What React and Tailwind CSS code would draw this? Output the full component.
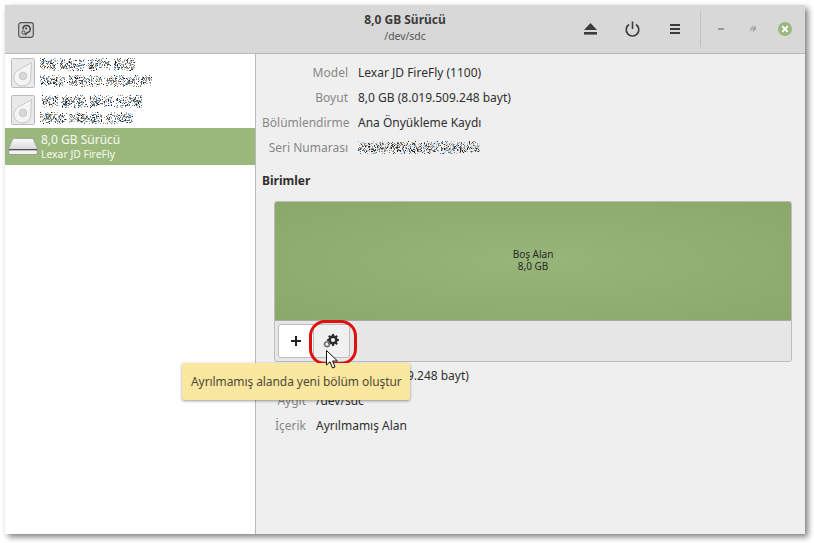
import React from "react";

const font = { fontFamily: '"Noto Sans", sans-serif' };

// pixel noise used for the scrambled text in the screenshot
function Scramble({ width, height, seed, gaps = [] }) {
  const cells = [];
  let s = seed;
  const rand = () => {
    s = (s * 16807) % 2147483647;
    return s / 2147483647;
  };
  const colors = ["#1d1d1d", "#444", "#8a7a55", "#4f78b0", "#9cc8ea", "#c9a27a", "#6d6d6d", "#a8a8a8", "#7fb2d8"];
  for (let y = 0; y < height; y++) {
    for (let x = 0; x < width; x++) {
      const inGap = gaps.some((g) => x >= g && x < g + 4);
      const edge = Math.min(y, height - 1 - y);
      const chance = inGap ? 0.06 : edge < 2 ? 0.2 : 0.48;
      if (rand() < chance) {
        cells.push(<rect key={x + "-" + y} x={x} y={y} width="1" height="1" fill={colors[Math.floor(rand() * colors.length)]} />);
      }
    }
  }
  return (
    <svg width={width} height={height} shapeRendering="crispEdges" className="block">
      {cells}
    </svg>
  );
}

function DiskIcon() {
  return (
    <svg width="24" height="30" viewBox="0 0 24 30" className="shrink-0">
      <rect x="0.5" y="0.5" width="23" height="29" rx="1" fill="#e9e9e9" stroke="#bcbcbc" />
      <path d="M20.5 4.5 L6.5 12.5 A8.5 8.5 0 1 0 19.5 22 Z" fill="#f5f5f5" stroke="#c8c8c8" />
      <circle cx="12" cy="18" r="3.8" fill="#d8d8d8" stroke="#c6c6c6" />
    </svg>
  );
}

function UsbDriveIcon() {
  return (
    <svg width="30" height="17" viewBox="0 0 30 17" className="shrink-0">
      <defs>
        <linearGradient id="usbTop" x1="0" y1="0" x2="0" y2="1">
          <stop offset="0" stopColor="#fafafa" />
          <stop offset="1" stopColor="#c8c8c8" />
        </linearGradient>
      </defs>
      <path d="M5 0.5 H25 L29.5 11 V14.5 Q29.5 16.5 27.5 16.5 H2.5 Q0.5 16.5 0.5 14.5 V11 Z" fill="url(#usbTop)" stroke="#8f8f8f" strokeWidth="0.6" />
      <rect x="1" y="11" width="28" height="1.5" fill="#4c4c4c" />
      <rect x="1.5" y="12.5" width="27" height="3.4" fill="#f4f4f4" />
    </svg>
  );
}

function SidebarRow({ seed, topWidth, bottomWidth, topOffset }) {
  return (
    <div className="h-[37px] flex items-center pl-[6px]">
      <DiskIcon />
      <div className="flex flex-col gap-[4px] pl-[5px]">
        <div style={{ marginLeft: topOffset }}>
          <Scramble width={topWidth} height={13} seed={seed} gaps={[16, 44, 70]} />
        </div>
        <Scramble width={bottomWidth} height={12} seed={seed + 77} gaps={[25, 62]} />
      </div>
    </div>
  );
}

function InfoRow({ label, labelWidth, children }) {
  return (
    <div className="h-[25px] flex items-center">
      <div className="text-right text-[#878787] shrink-0" style={{ width: labelWidth }}>
        {label}
      </div>
      <div className="ml-[10px] text-[#2f2f2f]">{children}</div>
    </div>
  );
}

function GearIcon() {
  return (
    <svg width="20" height="20" viewBox="0 0 20 20">
      <g fill="none" stroke="#2c2c2c" transform="translate(-1.5 2.5)">
        <circle cx="12.5" cy="6.5" r="3.4" strokeWidth="2.6" />
        <path d="M12.5 0.6V2.5M12.5 10.5V12.4M6.6 6.5H8.5M16.5 6.5H18.4M8.3 2.3L9.7 3.7M15.3 9.3L16.7 10.7M8.3 10.7L9.7 9.3M15.3 3.7L16.7 2.3" strokeWidth="2" />
      </g>
      <g fill="none" stroke="#6a6a6a" transform="translate(0.2 -1)">
        <circle cx="4.8" cy="14.2" r="2.3" strokeWidth="1.3" />
        <path d="M4.8 10.8V11.6M4.8 16.8V17.6M1.4 14.2H2.2M7.4 14.2H8.2M2.4 11.8L3 12.4M6.6 16L7.2 16.6M2.4 16.6L3 16M6.6 12.4L7.2 11.8" strokeWidth="1.2" />
      </g>
    </svg>
  );
}

function HeaderBar() {
  return (
    <div className="h-[49px] shrink-0 bg-[#d8d8d8] border-b border-[#b8b8b8] flex items-center">
      <div className="w-[250px] shrink-0 pl-[13px] pt-[1px]">
        {/* disk icon of the window */}
        <svg width="16" height="16" viewBox="0 0 16 16" className="block">
          <rect x="0.7" y="0.7" width="14.6" height="14.6" rx="2.5" fill="#d0d0d0" stroke="#555" strokeWidth="1.2" />
          <path d="M5 7.5 A3.6 3.6 0 1 1 9.5 10.5 L7 13" fill="none" stroke="#444" strokeWidth="1.5" />
          <circle cx="8" cy="6.5" r="1.1" fill="#444" />
          <circle cx="5.5" cy="10.5" r="1.6" fill="none" stroke="#444" />
        </svg>
      </div>
      <div className="w-[300px] shrink-0 flex flex-col items-center leading-[16px] pb-[2px]">
        <div className="font-bold text-[12px] text-[#3d3d3d]">8,0 GB Sürücü</div>
        <div className="text-[10.4px] text-[#555]">/dev/sdc</div>
      </div>
      <div className="flex items-center pl-[29px]">
        <svg width="13" height="12" viewBox="0 0 13 12" className="block">
          <path d="M6.5 0 L13 7 H0 Z" fill="#3c3c3c" />
          <rect x="0" y="9" width="13" height="2.6" fill="#3c3c3c" />
        </svg>
        <svg width="15" height="16" viewBox="0 0 15 16" className="block ml-[28px]">
          <path d="M4 3.5 A6.3 6.3 0 1 0 11 3.5" fill="none" stroke="#3c3c3c" strokeWidth="1.6" />
          <rect x="6.7" y="0.5" width="1.6" height="7.5" fill="#3c3c3c" />
        </svg>
        <svg width="10" height="10" viewBox="0 0 10 10" className="block ml-[30px]">
          <rect y="0" width="10" height="2" fill="#3c3c3c" />
          <rect y="4" width="10" height="2" fill="#3c3c3c" />
          <rect y="8" width="10" height="2" fill="#3c3c3c" />
        </svg>
        <div className="w-px h-[36px] bg-[#c0c0c0] ml-[20px]" />
        <div className="w-[6px] h-[2px] bg-[#9b9b9b] ml-[17px]" />
        <svg width="6" height="6" viewBox="0 0 6 6" className="block ml-[26px]">
          <path d="M0 2.5 L2.5 0 V2.5 Z M3 6 V3.3 L6 0 V3 Z" fill="#9b9b9b" />
          <path d="M0 6 V3 L3 0 H6 L0 6 Z" fill="#b5b5b5" />
        </svg>
        <div className="w-[14px] h-[14px] rounded-full bg-[#9ab87c] ml-[22px] flex items-center justify-center">
          <svg width="8" height="8" viewBox="0 0 8 8">
            <path d="M1.2 1.2 L6.8 6.8 M6.8 1.2 L1.2 6.8" stroke="#fff" strokeWidth="1.9" />
          </svg>
        </div>
      </div>
    </div>
  );
}

export default function App() {
  return (
    <div className="relative w-[814px] h-[543px] bg-white overflow-hidden pt-[5px] pl-[5px] text-[12px]" style={font}>
      <div className="w-[800px] h-[529px] flex flex-col bg-[#efefef] shadow-[3px_3px_6px_rgba(0,0,0,0.5)]">
        <HeaderBar />
        <div className="flex flex-1 min-h-0">
          {/* left disk list */}
          <div className="w-[250px] shrink-0 bg-white">
            <SidebarRow seed={1234} topWidth={95} bottomWidth={112} topOffset={0} />
            <SidebarRow seed={9876} topWidth={100} bottomWidth={93} topOffset={2} />
            <div className="h-[37px] bg-[#9ab87c] flex items-center pl-[3px] text-white">
              <UsbDriveIcon />
              <div className="pl-[3px] leading-[15px] text-[#f6f8f2]">
                <div className="text-[12px]">8,0 GB Sürücü</div>
                <div className="text-[10.4px]">Lexar JD FireFly</div>
              </div>
            </div>
          </div>

          <div className="flex-1 border-l border-[#b8b8b8] pt-[6px] pl-[6px]">
            <InfoRow label="Model" labelWidth={86}>Lexar JD FireFly (1100)</InfoRow>
            <InfoRow label="Boyut" labelWidth={86}>8,0 GB (8.019.509.248 bayt)</InfoRow>
            <InfoRow label="Bölümlendirme" labelWidth={86}>Ana Önyükleme Kaydı</InfoRow>
            <InfoRow label="Seri Numarası" labelWidth={86}>
              <Scramble width={122} height={13} seed={4242} />
            </InfoRow>

            <div className="font-bold text-[#2f2f2f] mt-[12px] h-[17px] leading-[17px]">Birimler</div>

            <div className="ml-[12px] mt-[12px] w-[518px] h-[161px] border border-[#bdbdbd] rounded-[3px] overflow-hidden bg-[#e6e6e6] flex flex-col">
              <div className="h-[119px] shrink-0 flex flex-col items-center justify-center pb-[2px] text-[10px] leading-[12px] text-[#2a2a2a] border-b border-[#a9a9a9] bg-[radial-gradient(ellipse_at_center,#98b57a_0%,#8aa869_100%)]">
                <div>Boş Alan</div>
                <div>8,0 GB</div>
              </div>
              <div className="flex pl-[3px] pt-[3px]">
                <div className="w-[36px] h-[34px] bg-white border border-[#bdbdbd] rounded-l-[3px] flex items-center justify-center">
                  <svg width="10" height="10" viewBox="0 0 10 10">
                    <path d="M5 0 V10 M0 5 H10" stroke="#222" strokeWidth="2" />
                  </svg>
                </div>
                <div className="w-[36px] h-[34px] bg-[#f0f0f0] border border-l-0 border-[#bdbdbd] rounded-r-[3px] flex items-center justify-center">
                  <GearIcon />
                </div>
              </div>
            </div>

            <div className="ml-[-7px] mt-[1px]">
              <InfoRow label="Boyut" labelWidth={51}>8,0 GB (8.019.509.248 bayt)</InfoRow>
              <InfoRow label="Aygıt" labelWidth={51}>/dev/sdc</InfoRow>
              <InfoRow label="İçerik" labelWidth={51}>Ayrılmamış Alan</InfoRow>
            </div>
          </div>
        </div>
      </div>

      {/* red highlight round the gear button */}
      <div className="absolute left-[309px] top-[320px] w-[48px] h-[45px] border-[3px] border-[#e01010] rounded-[16px]" />

      {/* tooltip */}
      <div className="absolute left-[182px] top-[363px] w-[228px] h-[37px] bg-[#fae7a0] rounded-[2px] shadow-[0_1px_3px_rgba(0,0,0,0.4)] flex items-center pl-[9px] text-[#4f4a38] tracking-[-0.08px]">
        Ayrılmamış alanda yeni bölüm oluştur
      </div>

      {/* mouse pointer */}
      <svg width="13" height="20" viewBox="0 0 13 20" className="absolute left-[326px] top-[350px]">
        <path d="M0.5 0.5 V15 L4 11.8 L6.5 18 L9 17 L6.6 11 H11.5 Z" fill="#fff" stroke="#111" strokeWidth="1" />
      </svg>
    </div>
  );
}
